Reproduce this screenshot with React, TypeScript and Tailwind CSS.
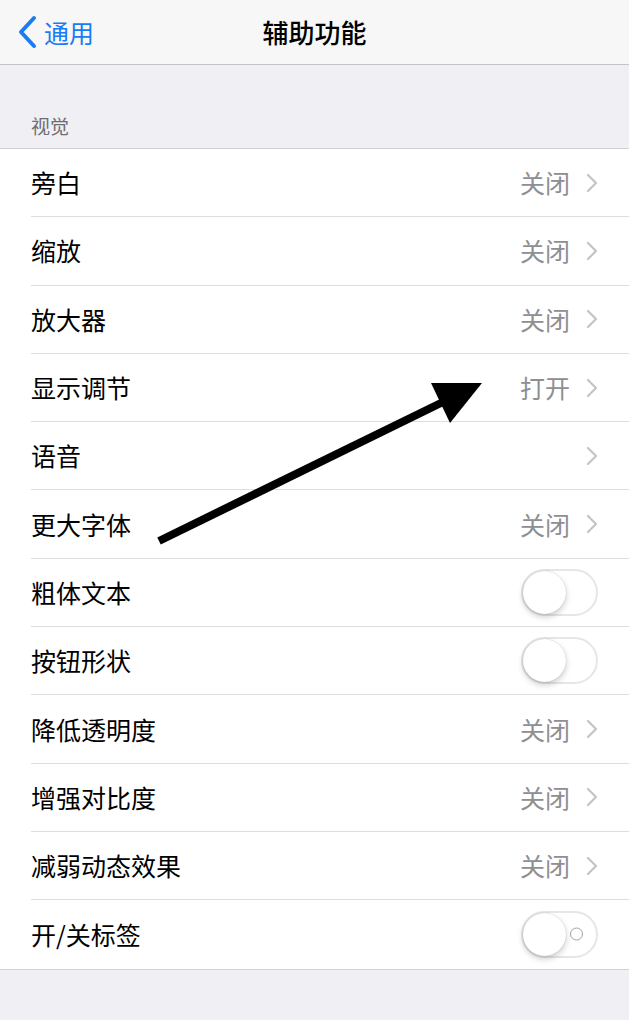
import React from 'react';

type Row = { label: string; value?: string; kind: 'link' | 'toggle'; labels?: boolean };

const rows: Row[] = [
  { label: '旁白', value: '关闭', kind: 'link' },
  { label: '缩放', value: '关闭', kind: 'link' },
  { label: '放大器', value: '关闭', kind: 'link' },
  { label: '显示调节', value: '打开', kind: 'link' },
  { label: '语音', kind: 'link' },
  { label: '更大字体', value: '关闭', kind: 'link' },
  { label: '粗体文本', kind: 'toggle' },
  { label: '按钮形状', kind: 'toggle' },
  { label: '降低透明度', value: '关闭', kind: 'link' },
  { label: '增强对比度', value: '关闭', kind: 'link' },
  { label: '减弱动态效果', value: '关闭', kind: 'link' },
  { label: '开/关标签', kind: 'toggle', labels: true },
];

const Chevron = () => (
  <svg width="12" height="20" viewBox="0 0 12 20" fill="none">
    <path d="M2 2l8 8-8 8" stroke="#c4c4c8" strokeWidth="2.2" strokeLinecap="round" strokeLinejoin="round" />
  </svg>
);

const Toggle = ({ labels }: { labels?: boolean }) => (
  <div className="relative w-[77px] h-[47px] rounded-full border-2 border-[#e6e6e9] bg-white">
    {labels && (
      <div className="absolute right-[13px] top-1/2 -translate-y-1/2 w-[13px] h-[13px] rounded-full border-[1.5px] border-[#a3a3a3]" />
    )}
    <div className="absolute left-0 top-0 w-[43px] h-[43px] rounded-full bg-white shadow-[0_3px_6px_rgba(0,0,0,0.2),0_0_1px_rgba(0,0,0,0.25)]" />
  </div>
);

export default function App() {
  return (
    <div
      className="relative w-[629px] h-[1020px] bg-[#efeff4] overflow-hidden"
      style={{ fontFamily: '"Noto Sans CJK SC", "Noto Sans", sans-serif' }}
    >
      {/* Nav bar */}
      <div className="relative h-[65px] bg-[#f7f7f8] border-b border-[#c4c4c6] flex items-center">
        <div className="flex items-center pl-[17px] text-[#1a7cf2]">
          <svg width="22" height="34" viewBox="0 0 22 34" fill="none">
            <path d="M17 3L4 17l13 14" stroke="#1a7cf2" strokeWidth="4" strokeLinecap="round" strokeLinejoin="round" />
          </svg>
          <span className="ml-[5px] text-[25px] leading-none">通用</span>
        </div>
        <div className="absolute inset-0 flex items-center justify-center text-[26px] font-medium text-black leading-none">
          辅助功能
        </div>
      </div>

      {/* Section header */}
      <div className="h-[83px] flex items-end pl-[31px] pb-[13px] text-[19px] text-[#6d6d72] leading-none">
        视觉
      </div>

      {/* List */}
      <div className="bg-white border-t border-b border-[#d2d2d6]">
        {rows.map((r, i) => (
          <div key={r.label} className="h-[68.3px] pl-[31px] flex">
            <div
              className={`flex-1 flex items-center justify-between pr-[31px] ${
                i < rows.length - 1 ? 'border-b border-[#dedee2]' : ''
              }`}
            >
              <span className="text-[25px] text-black leading-none">{r.label}</span>
              {r.kind === 'link' ? (
                <div className="flex items-center gap-[16px]">
                  {r.value && <span className="text-[25px] text-[#8e8e93] leading-none">{r.value}</span>}
                  <Chevron />
                </div>
              ) : (
                <Toggle labels={r.labels} />
              )}
            </div>
          </div>
        ))}
      </div>

      {/* Annotation arrow */}
      <svg className="absolute left-0 top-0 pointer-events-none" width="629" height="1020">
        <line x1="159" y1="541" x2="445" y2="401" stroke="#000" strokeWidth="8" />
        <polygon points="431,383 482,383 450,423" fill="#000" />
      </svg>
    </div>
  );
}
